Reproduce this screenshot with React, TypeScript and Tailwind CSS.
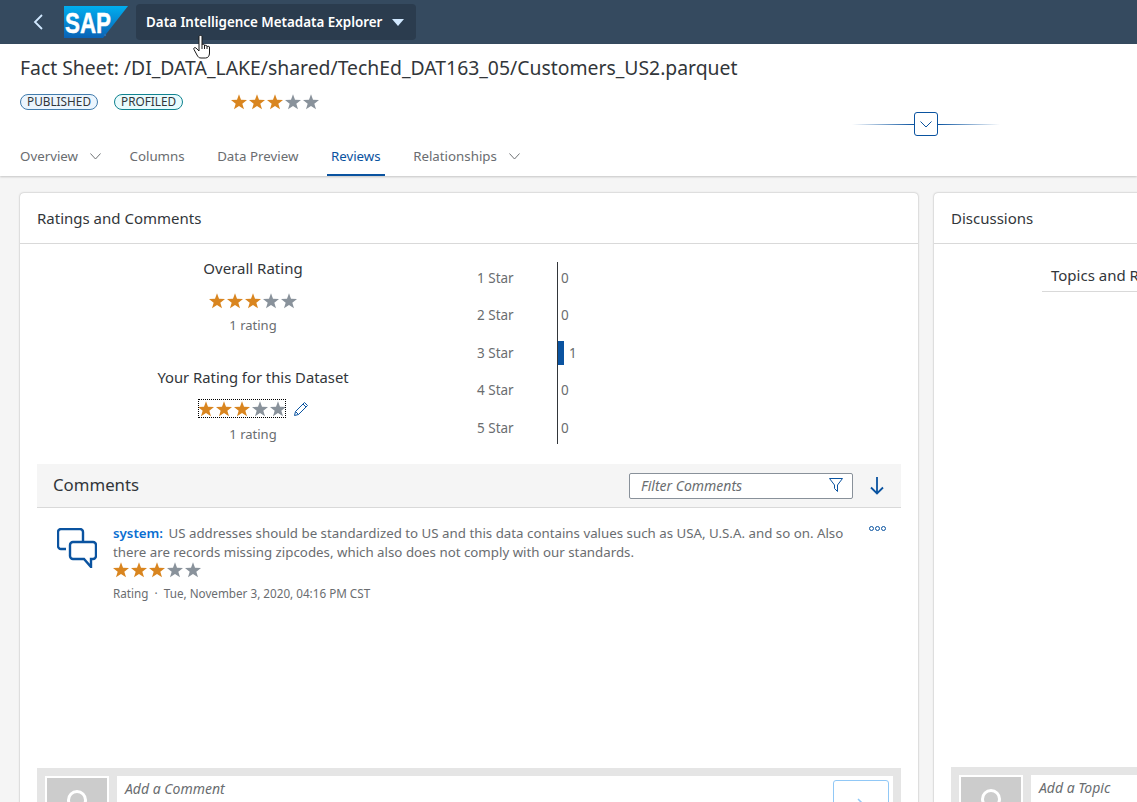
const FONT = "font-['Noto_Sans','Open_Sans',sans-serif]";

function Star({ on }: { on: boolean }) {
  return (
    <svg width="16" height="16" viewBox="0 0 24 24" className="shrink-0">
      <path
        d="M12 .5l3 8.300 9 .2-7 5.500 2.500 8.500-7.500-5-7.500 5L7 14.500 0 9l9-.2z"
        fill={on ? "#d9851f" : "#89929b"}
      />
    </svg>
  );
}

function Stars() {
  return (
    <div className="flex gap-[2px]">
      {[1, 2, 3, 4, 5].map((n) => (
        <Star key={n} on={n <= 3} />
      ))}
    </div>
  );
}

function Chevron({ color, width = 12 }: { color: string; width?: number }) {
  return (
    <svg width={width} height="7" viewBox="0 0 12 7" preserveAspectRatio="none" fill="none" stroke={color} className="shrink-0">
      <path d="M.5.500 6 6 11.500.500" />
    </svg>
  );
}

function SapLogo() {
  return (
    <svg width="64" height="32" viewBox="0 0 64 32" className="shrink-0">
      <defs>
        <linearGradient id="sapBlue" x1="0" y1="0" x2="0" y2="1">
          <stop offset="0" stopColor="#00aeef" />
          <stop offset="1" stopColor="#0a62b5" />
        </linearGradient>
      </defs>
      <polygon points="0,0 64,0 39,32 0,32" fill="url(#sapBlue)" />
      <text
        x="1"
        y="27"
        fontFamily="Liberation Sans"
        fontWeight="700"
        fontSize="30"
        textLength="46"
        lengthAdjust="spacingAndGlyphs"
        stroke="#fff"
        strokeWidth="0.5"
        fill="#fff"
      >
        SAP
      </text>
      <circle cx="41" cy="29" r="1.200" fill="#2a6fb0" />
    </svg>
  );
}

function HandCursor() {
  return (
    <svg width="18" height="24" viewBox="0 0 18 24" className="absolute left-[193px] top-[35px] z-10">
      <path
        d="M6 1.500c0-1.500 3-1.500 3 0V10c0-1 2.500-1 2.500 0v1c0-1 2.500-1 2.500 0v1c0-1 2.500-1 2.500 0v6c0 3-1.500 5-4 5H8c-2 0-3-1-4-3L1 14.500c-1-1.500 1-2.500 2-1.500l3 3z"
        fill="#fff"
        stroke="#1a1a1a"
      />
      <path d="M9 10v4M11.500 11v3M14 12v2" fill="none" stroke="#1a1a1a" />
    </svg>
  );
}

function Badge({ text, color, bg }: { text: string; color: string; bg: string }) {
  return (
    <span
      className="flex h-4 items-center rounded-full border px-[6px] text-[11.8px] leading-none text-[#32363a]"
      style={{ borderColor: color, background: bg }}
    >
      {text}
    </span>
  );
}

function Tab({ label, active, menu }: { label: string; active?: boolean; menu?: boolean }) {
  return (
    <div
      className={
        active
          ? "flex h-full items-center border-b-2 border-[#0a53a0] px-1 pt-[2px] text-[13.3px] text-[#0a53a0]"
          : "flex h-full items-center px-1 text-[13.3px] text-[#6a6d70]"
      }
    >
      {label}
      {menu && (
        <span className="ml-3 -mr-1">
          <Chevron color="#6a6d70" width={11} />
        </span>
      )}
    </div>
  );
}

function ChartRow({ label, value, bar }: { label: string; value: number; bar?: boolean }) {
  return (
    <div className="flex h-[37.5px] items-center text-[13.5px] text-[#6a6d70]">
      <span className="w-20">{label}</span>
      <span className="flex h-6 items-center">
        {bar && <span className="h-6 w-[7px] bg-[#0a53a0]" />}
        <span className={bar ? "ml-[5px]" : "ml-1"}>{value}</span>
      </span>
    </div>
  );
}

function Composer({ placeholder, send }: { placeholder: string; send?: boolean }) {
  return (
    <div className="flex h-[70px] gap-2 bg-[#e5e5e5] pl-2 pr-2 pt-2">
      <div className="flex h-[64px] w-[64px] shrink-0 justify-center border-2 border-white bg-[#cccccc] pt-[12px]">
        <span className="h-5 w-5 rounded-full border-[3px] border-white" />
      </div>
      <div className="relative flex-1 bg-white px-2 py-[2px] text-[14px] italic text-[#6a6d70]">
        {placeholder}
        {send && (
          <span className="absolute right-1 top-1 flex h-10 w-14 justify-center rounded-[3px] border border-[#91c8f6] bg-white pt-[17px]">
            <svg width="8" height="14" viewBox="0 0 8 14" fill="none" stroke="#91c8f6" strokeWidth="1.5">
              <path d="M1 1l6 6-6 6" />
            </svg>
          </span>
        )}
      </div>
    </div>
  );
}

function CommentsIcon() {
  return (
    <svg width="40" height="40" viewBox="0 0 40 40" fill="none" stroke="#0a53a0" strokeWidth="2.4" className="mt-1 shrink-0">
      <path d="M9 21H4a3 3 0 0 1-3-3V4a3 3 0 0 1 3-3h19a3 3 0 0 1 3 3v9" />
      <path d="M16 14h20a3 3 0 0 1 3 3v11a3 3 0 0 1-3 3h-2v8l-7-8H16a3 3 0 0 1-3-3V17a3 3 0 0 1 3-3z" />
    </svg>
  );
}

export default function App() {
  return (
    <div className={`relative flex h-[802px] w-[1137px] flex-col overflow-hidden bg-[#f5f5f5] text-[#32363a] ${FONT}`}>
      <header className="flex h-11 shrink-0 items-center bg-[#354a5f] pl-[33px]">
        <svg width="10" height="16" viewBox="0 0 10 16" fill="none" stroke="#d1e8ff" strokeWidth="1.8" className="mr-[21px]">
          <path d="M9 1 2 8l7 7" />
        </svg>
        <SapLogo />
        <button className="ml-2 flex h-9 w-[280px] items-center justify-between rounded bg-[#2b3c4e] pl-[10px] pr-3 text-[13.4px] font-semibold text-white">
          Data Intelligence Metadata Explorer
          <span className="h-0 w-0 border-x-[6px] border-t-[7px] border-x-transparent border-t-[#d1e8ff]" />
        </button>
      </header>
      <HandCursor />

      <section className="relative h-[132px] shrink-0 bg-white pl-5 shadow-[0_1px_2px_rgba(0,0,0,0.2)]">
        <h1 className="pt-[11px] text-[19.38px] leading-[26px]">Fact Sheet: /DI_DATA_LAKE/shared/TechEd_DAT163_05/Customers_US2.parquet</h1>
        <div className="mt-[11px] flex h-5 items-center">
          <Badge text="PUBLISHED" color="#427cac" bg="#ebf5fe" />
          <span className="w-4" />
          <Badge text="PROFILED" color="#0f828f" bg="#e8fbfd" />
          <span className="w-[48px]" />
          <Stars />
        </div>
        <div className="absolute left-[852px] top-[68px] flex w-[148px] items-center">
          <span className="h-px flex-1 bg-gradient-to-r from-transparent to-[#0a53a0]" />
          <span className="flex h-6 w-6 items-center justify-center rounded-[3px] border border-[#0a53a0] bg-white">
            <Chevron color="#0a53a0" />
          </span>
          <span className="h-px flex-1 bg-gradient-to-l from-transparent to-[#0a53a0]" />
        </div>
        <nav className="absolute bottom-0 left-4 flex h-[45px] gap-[24.5px] pt-[6px]">
          <Tab label="Overview" menu />
          <Tab label="Columns" />
          <Tab label="Data Preview" />
          <Tab label="Reviews" active />
          <Tab label="Relationships" menu />
        </nav>
      </section>

      <main className="flex gap-4 pl-5 pt-[17px]">
        <section className="flex h-[645px] w-[898px] shrink-0 flex-col rounded bg-white shadow-[0_0_2px_rgba(0,0,0,0.35)]">
          <div className="flex h-[51px] shrink-0 items-center border-b border-[#d9d9d9] pl-[17px] text-[15px]">
            Ratings and Comments
          </div>
          <div className="flex h-[220px] shrink-0 pl-[17px]">
            <div className="flex w-[432px] flex-col items-center pt-[14px]">
              <div className="text-[15px] leading-5">Overall Rating</div>
              <div className="mt-[15px]"><Stars /></div>
              <div className="mt-[6px] text-[13px] leading-5 text-[#6a6d70]">1 rating</div>
              <div className="mt-8 text-[14.8px] leading-5">Your Rating for this Dataset</div>
              <div className="mt-3 flex items-center gap-2">
                <div className="flex h-[19px] w-[88px] items-center outline-1 -outline-offset-1 outline-dotted outline-black">
                  <Stars />
                </div>
                <svg width="14" height="14" viewBox="0 0 14 14" fill="none" stroke="#0a53a0">
                  <path d="M.5 13.500l1-4L10.500.5l3 3-9 9zM1.500 9.500l3 3M9 2l3 3" />
                </svg>
              </div>
              <div className="mt-[6px] text-[13px] leading-5 text-[#6a6d70]">1 rating</div>
            </div>
            <div className="relative ml-2 mt-[15px] h-[187.5px]">
              <span className="absolute bottom-[3px] left-20 top-[3px] w-px bg-[#32363a]" />
              <ChartRow label="1 Star" value={0} />
              <ChartRow label="2 Star" value={0} />
              <ChartRow label="3 Star" value={1} bar />
              <ChartRow label="4 Star" value={0} />
              <ChartRow label="5 Star" value={0} />
            </div>
          </div>
          <div className="mx-[17px] flex h-[44px] shrink-0 items-center justify-between border-b border-[#d9d9d9] bg-[#f5f5f5] pl-4 pr-[17px]">
            <span className="pb-[2px] text-[16.8px]">Comments</span>
            <div className="flex items-center gap-[17px]">
              <div className="flex h-[26px] w-[224px] items-center justify-between rounded-[2px] border border-[#89919a] bg-white pb-px pl-[11px] pr-[9px] text-[14px] italic text-[#6a6d70]">
                Filter Comments
                <svg width="14" height="14" viewBox="0 0 14 14" fill="none" stroke="#0a53a0">
                  <path d="M.5.5h13L8.500 7v6.500l-3-3V7z" />
                </svg>
              </div>
              <svg width="14" height="18" viewBox="0 0 14 18" fill="none" stroke="#0a53a0" strokeWidth="1.8">
                <path d="M7 0v16.500M1 10.500l6 6 6-6" />
              </svg>
            </div>
          </div>
          <div className="mx-[17px] flex gap-4 pl-[20px] pr-[15px] pt-[16px]">
            <CommentsIcon />
            <div className="flex-1">
              <div className="relative pr-[30px] text-[13.3px] leading-[19px] text-[#6a6d70]">
                <span className="mr-[2px] font-semibold text-[#0a6ed1]">system: </span>
                US addresses should be standardized to US and this data contains values such as USA, U.S.A. and so on. Also there are records missing zipcodes, which also does not comply with our standards.
                <svg width="17" height="5" viewBox="0 0 17 5" fill="none" stroke="#0a53a0" className="absolute right-0 top-[2px]">
                  <circle cx="2.500" cy="2.500" r="2" />
                  <circle cx="8.500" cy="2.500" r="2" />
                  <circle cx="14.500" cy="2.500" r="2" />
                </svg>
              </div>
              <Stars />
              <div className="mt-[7px] text-[11.7px] leading-4 text-[#6a6d70]">Rating&nbsp; ·&nbsp; Tue, November 3, 2020, 04:16 PM CST</div>
            </div>
          </div>
          <div className="mx-[17px] mt-auto">
            <Composer placeholder="Add a Comment" send />
          </div>
        </section>

        <section className="flex h-[644px] w-[400px] shrink-0 flex-col rounded bg-white shadow-[0_0_2px_rgba(0,0,0,0.35)]">
          <div className="flex h-[51px] shrink-0 items-center border-b border-[#d9d9d9] pl-[17px] text-[15px]">
            Discussions
          </div>
          <div className="ml-[108px] mt-5 border-b border-[#d9d9d9] pb-[4px] pl-[9px] text-[15px]">Topics and Replies</div>
          <div className="mx-[17px] mt-auto">
            <Composer placeholder="Add a Topic" />
          </div>
        </section>
      </main>
    </div>
  );
}
